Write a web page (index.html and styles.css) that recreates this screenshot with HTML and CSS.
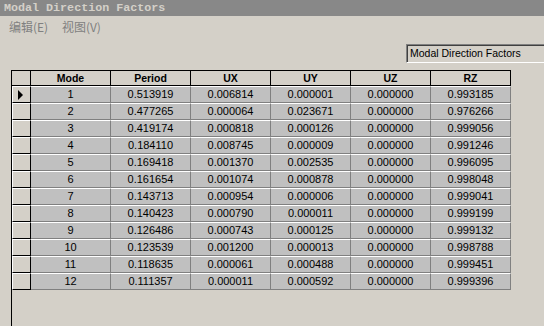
FILE: index.html
```html
<!DOCTYPE html>
<html lang="zh">
<head>
    <meta charset="UTF-8">
    <title>Modal Direction Factors</title>
    <link rel="stylesheet" href="styles.css">
</head>
<body>
    <div class="titlebar">Modal Direction Factors</div>
    <div class="menubar">
        <span class="menu-item">编辑(E)</span>
        <span class="menu-item">视图(V)</span>
    </div>
    <div class="toolbar">
        <div class="combo">Modal Direction Factors</div>
    </div>
    <div class="grid-area">
        <table class="grid">
            <thead>
                <tr>
                    <th class="corner"></th>
                    <th>Mode</th>
                    <th>Period</th>
                    <th>UX</th>
                    <th>UY</th>
                    <th>UZ</th>
                    <th>RZ</th>
                </tr>
            </thead>
            <tbody>
                <tr><td class="ind"><span class="arrow"></span></td><td>1</td><td>0.513919</td><td>0.006814</td><td>0.000001</td><td>0.000000</td><td>0.993185</td></tr>
                <tr><td class="ind"></td><td>2</td><td>0.477265</td><td>0.000064</td><td>0.023671</td><td>0.000000</td><td>0.976266</td></tr>
                <tr><td class="ind"></td><td>3</td><td>0.419174</td><td>0.000818</td><td>0.000126</td><td>0.000000</td><td>0.999056</td></tr>
                <tr><td class="ind"></td><td>4</td><td>0.184110</td><td>0.008745</td><td>0.000009</td><td>0.000000</td><td>0.991246</td></tr>
                <tr><td class="ind"></td><td>5</td><td>0.169418</td><td>0.001370</td><td>0.002535</td><td>0.000000</td><td>0.996095</td></tr>
                <tr><td class="ind"></td><td>6</td><td>0.161654</td><td>0.001074</td><td>0.000878</td><td>0.000000</td><td>0.998048</td></tr>
                <tr><td class="ind"></td><td>7</td><td>0.143713</td><td>0.000954</td><td>0.000006</td><td>0.000000</td><td>0.999041</td></tr>
                <tr><td class="ind"></td><td>8</td><td>0.140423</td><td>0.000790</td><td>0.000011</td><td>0.000000</td><td>0.999199</td></tr>
                <tr><td class="ind"></td><td>9</td><td>0.126486</td><td>0.000743</td><td>0.000125</td><td>0.000000</td><td>0.999132</td></tr>
                <tr><td class="ind"></td><td>10</td><td>0.123539</td><td>0.001200</td><td>0.000013</td><td>0.000000</td><td>0.998788</td></tr>
                <tr><td class="ind"></td><td>11</td><td>0.118635</td><td>0.000061</td><td>0.000488</td><td>0.000000</td><td>0.999451</td></tr>
                <tr><td class="ind"></td><td>12</td><td>0.111357</td><td>0.000011</td><td>0.000592</td><td>0.000000</td><td>0.999396</td></tr>
            </tbody>
        </table>
    </div>
</body>
</html>
```

FILE: styles.css
```css
body {
    margin: 0;
    width: 544px;
    height: 326px;
    overflow: hidden;
    display: flex;
    flex-direction: column;
    background-color: #d4d0c8;
    font-family: "Liberation Sans", Arial, sans-serif;
    color: #000;
}
.titlebar {
    height: 16px;
    line-height: 16px;
    padding-left: 4px;
    background-color: #888888;
    color: #d4d0c8;
    font-family: "Liberation Mono", "Courier New", monospace;
    font-weight: bold;
    font-size: 11.7px;
    white-space: nowrap;
}
.menubar {
    height: 22px;
    line-height: 22px;
    padding-left: 9px;
    color: #808080;
    font-family: "Noto Sans CJK SC", sans-serif;
    font-size: 12px;
}
.menu-item {
    margin-right: 11px;
}
.toolbar {
    display: flex;
    justify-content: flex-end;
    padding: 6px 0 7px;
}
.combo {
    box-sizing: border-box;
    width: 138px;
    height: 19px;
    padding-left: 3px;
    line-height: 16px;
    font-size: 10.5px;
    white-space: nowrap;
    background-color: #d4d0c8;
    border-top: 1px solid #808080;
    border-left: 1px solid #808080;
    border-bottom: 1px solid #fff;
    box-shadow: inset 1px 1px 0 #404040;
}
.grid-area {
    flex: 1;
    margin-left: 11px;
    border-left: 1px solid #000;
}
.grid {
    table-layout: fixed;
    width: 499px;
    border-collapse: separate;
    border-spacing: 0;
}
.grid th, .grid td {
    box-sizing: border-box;
    padding: 0;
    text-align: center;
    white-space: nowrap;
}
.grid th {
    width: 80px;
    height: 16px;
    line-height: 14px;
    font-size: 10.5px;
    font-weight: bold;
    background-color: #d4d0c8;
    border-top: 1px solid #000;
    border-bottom: 1px solid #000;
    border-right: 1px solid #000;
}
.grid th.corner {
    width: 19px;
}
.grid td {
    height: 17px;
    line-height: 15px;
    font-size: 11px;
    background-color: #c0c0c0;
    border-top: 1px solid #fff;
    border-bottom: 1px solid #808080;
    border-right: 1px solid #808080;
}
.grid td.ind {
    background-color: #d4d0c8;
    border-left: 1px solid #fff;
    border-right: 1px solid #000;
    border-bottom: 1px solid #000;
    text-align: left;
}
.arrow {
    display: block;
    width: 0;
    height: 0;
    margin-left: 5px;
    border-left: 5px solid #000;
    border-top: 5px solid transparent;
    border-bottom: 5px solid transparent;
}
```
